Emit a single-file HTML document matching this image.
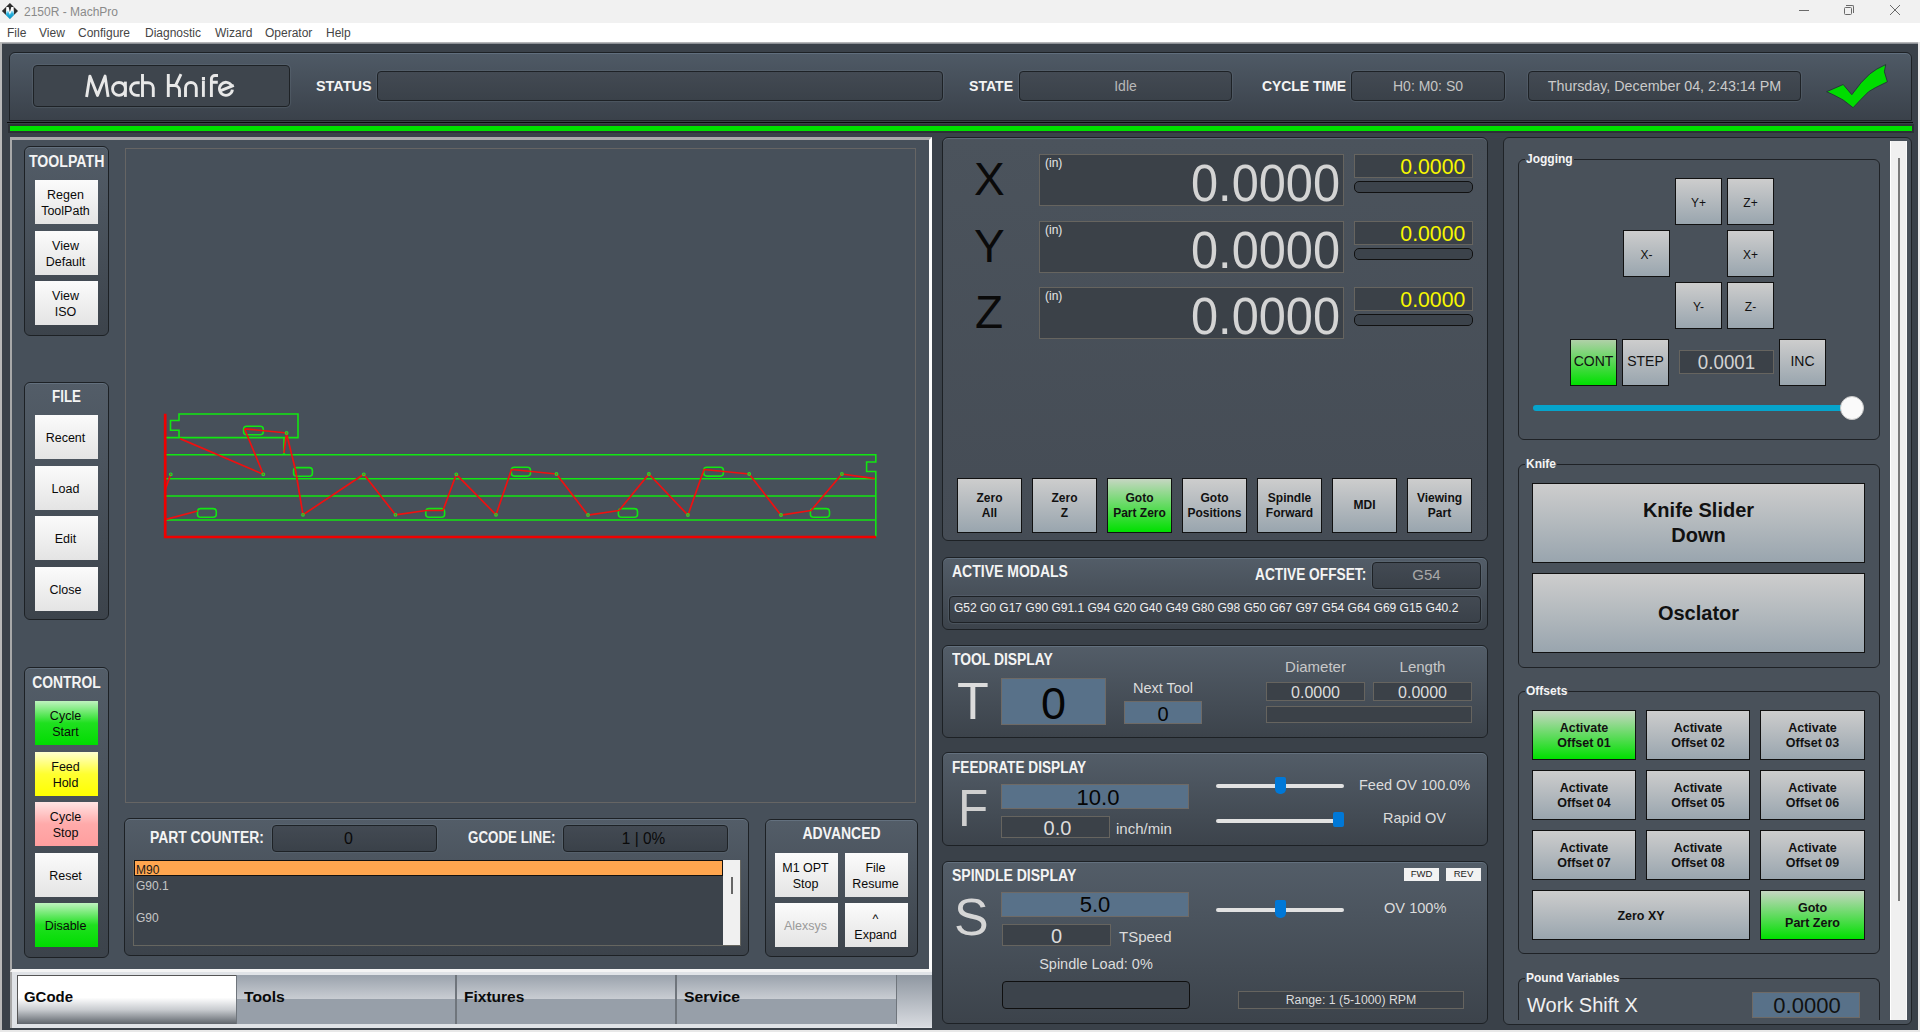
<!DOCTYPE html>
<html><head><meta charset="utf-8">
<style>
*{margin:0;padding:0;box-sizing:border-box}
html,body{width:1920px;height:1032px;overflow:hidden}
body{position:relative;background:#3a4149;font-family:"Liberation Sans",sans-serif;color:#f0f0f0}
.a{position:absolute}
.c{display:flex;align-items:center;justify-content:center;text-align:center}
.grp{position:absolute;border:1px solid #1d2125;border-radius:6px;background:linear-gradient(#535d68,#3c434b);box-shadow:inset 0 1px 0 rgba(130,150,170,.35)}
.fld{position:absolute;background:linear-gradient(#434a53,#3a4149);border:1px solid #1e2226;border-radius:4px;box-shadow:0 0 1px 1px rgba(110,122,135,.30)}
.wb{position:absolute;background:linear-gradient(#fbfbfb,#e4e4e4);color:#0a0a0a;font-size:12.5px;line-height:16px;padding-right:2px;padding-top:1px;display:flex;align-items:center;justify-content:center;text-align:center}
.gb{position:absolute;border:1px solid #111;background:linear-gradient(#cdcdcd,#99a5ae);color:#111;font-weight:bold;font-size:12px;line-height:15px;display:flex;align-items:center;justify-content:center;text-align:center}
.gr{background:linear-gradient(#c6d6c2,#00e000)}
.ttl{position:absolute;font-weight:bold;font-size:15.5px;color:#f4f4f4;white-space:nowrap}
.lbl{position:absolute;white-space:nowrap}
.dfld{position:absolute;background:#3b4148;border:1px solid #66645f}
.bfld{position:absolute;background:#587189;border:1px solid #6e6a66}
.gbox{position:absolute;border:1px solid #1f2226;border-radius:6px}
.gboxt{position:absolute;font-weight:bold;font-size:12px;color:#f4f4f4;background:#49515a;padding:0 1px;white-space:nowrap;line-height:14px}
</style></head><body>
<!-- title bar -->
<div class="a" style="left:0;top:0;width:1920px;height:23px;background:#f1f1f1"></div>
<svg class="a" style="left:0;top:0" width="22" height="22" viewBox="0 0 22 22">
<defs><linearGradient id="lg1" x1="0" y1="0" x2="0" y2="1"><stop offset="0" stop-color="#bfefff"/><stop offset="0.35" stop-color="#2ab0dc"/><stop offset="1" stop-color="#0797c8"/></linearGradient></defs>
<path d="M9.9 3 L18 11 L9.9 18.9 L1.9 11 Z" fill="#2e2e2e"/>
<path d="M6.3 7 L8.6 7 L9.9 12.3 L11.3 7 L13.6 7 L14 15 L9.9 18.9 L5.9 15 Z" fill="#fff"/>
<path d="M6.6 10.8 L8.4 10.8 L9.9 14.9 L11.4 10.8 L13.3 10.8 L14 15 L9.9 18.9 L5.9 15 Z" fill="url(#lg1)"/>
</svg>
<div class="lbl" style="left:24px;top:5px;font-size:12px;color:#8a8a8a">2150R - MachPro</div>
<div class="a" style="left:1799px;top:10px;width:10px;height:1px;background:#6a6a6a"></div>
<div class="a" style="left:1844px;top:7px;width:8px;height:8px;border:1px solid #6a6a6a;border-radius:1.5px"></div>
<div class="a" style="left:1846px;top:5px;width:8px;height:8px;border-top:1px solid #6a6a6a;border-right:1px solid #6a6a6a;border-radius:0 2px 0 0"></div>
<svg class="a" style="left:1890px;top:5px" width="10" height="10"><path d="M0 0L10 10M10 0L0 10" stroke="#6a6a6a" stroke-width="1"/></svg>
<!-- menu -->
<div class="a" style="left:0;top:23px;width:1920px;height:19px;background:#fff"></div>
<div class="lbl" style="top:26px;left:7px;font-size:12px;color:#454545">File</div>
<div class="lbl" style="top:26px;left:39px;font-size:12px;color:#454545">View</div>
<div class="lbl" style="top:26px;left:78px;font-size:12px;color:#454545">Configure</div>
<div class="lbl" style="top:26px;left:145px;font-size:12px;color:#454545">Diagnostic</div>
<div class="lbl" style="top:26px;left:215px;font-size:12px;color:#454545">Wizard</div>
<div class="lbl" style="top:26px;left:265px;font-size:12px;color:#454545">Operator</div>
<div class="lbl" style="top:26px;left:326px;font-size:12px;color:#454545">Help</div>
<div class="a" style="left:0;top:42px;width:1920px;height:2px;background:linear-gradient(#c8c8c8,#7a7f85)"></div>
<!-- window borders -->
<div class="a" style="left:0;top:42px;width:2px;height:990px;background:#b9b9b9"></div>
<div class="a" style="left:1918px;top:42px;width:2px;height:990px;background:#e8e8e8"></div>
<div class="a" style="left:0;top:1030px;width:1920px;height:2px;background:#e8e8e8"></div>

<!-- HEADER -->
<div class="grp" style="left:9px;top:52px;width:1903px;height:69px;border-radius:6px 6px 0 0;background:linear-gradient(#4f5a66,#3a414a)"></div>
<div class="fld" style="left:33px;top:65px;width:257px;height:42px;background:#3e454d"></div>
<svg class="a" style="left:0;top:0;overflow:visible" width="300" height="110" viewBox="0 0 300 110">
<g fill="none" stroke="#e8e8e8" stroke-width="2.9" stroke-linecap="butt" stroke-linejoin="round">
<path d="M86.6 96.9 L89.9 76.1 L97.5 95.4 L105.1 76.1 L108.1 96.9"/>
<circle cx="119" cy="88.9" r="6.45"/>
<path d="M125.4 81.6 V96.9"/>
<path d="M139.7 82.75 H136.8 A6.3 6.3 0 0 0 136.8 95.35 H139.7"/>
<path d="M142.5 74 V96.9 M142.5 82.75 H148 A5.3 5.3 0 0 1 153.3 88.05 V96.9"/>
<path d="M168.3 74 V96.9 M168.3 85.5 H174.5 A5 5 0 0 1 179.5 90.5 V96.9 M175.3 86 L181 74.2"/>
<path d="M185.5 96.9 V87.95 A5.4 5.4 0 0 1 196.3 87.95 V96.9"/>
<path d="M203.4 80.6 V96.9"/>
<path d="M211.4 96.9 V79 A3.55 3.55 0 0 1 214.95 75.45 H218 M211.4 82.3 H217.8"/>
<path d="M221.3 90.4 L233.8 85.3 M231.6 85.6 A6.5 6.5 0 1 0 232.4 89.6"/>
</g>
<rect x="201.9" y="77" width="3.1" height="3" fill="#e8e8e8"/>
</svg>
<div class="ttl" style="left:315.7px;top:77.0px;font-size:15px;transform:scaleX(0.961);transform-origin:left top">STATUS</div>
<div class="fld" style="left:377px;top:71px;width:566px;height:30px"></div>
<div class="ttl" style="left:969.4px;top:77.0px;font-size:15px;transform:scaleX(0.939);transform-origin:left top">STATE</div>
<div class="fld" style="left:1019px;top:71px;width:213px;height:30px"></div>
<div class="lbl" style="left:1019px;top:78px;width:213px;text-align:center;font-size:14px;color:#b8b8b8">Idle</div>
<div class="ttl" style="left:1261.5px;top:77.0px;font-size:15px;transform:scaleX(0.926);transform-origin:left top">CYCLE TIME</div>
<div class="fld" style="left:1351px;top:71px;width:154px;height:30px"></div>
<div class="lbl" style="left:1351px;top:78px;width:154px;text-align:center;font-size:14px;color:#c4c4c4">H0: M0: S0</div>
<div class="fld" style="left:1528px;top:71px;width:273px;height:30px"></div>
<div class="lbl" style="left:1528px;top:78px;width:273px;text-align:center;font-size:14.3px;color:#cacaca">Thursday, December 04, 2:43:14 PM</div>
<svg class="a" style="left:1820px;top:60px" width="72" height="52" viewBox="1820 60 72 52">
<path d="M1826.6 91.7 L1843.2 84.5 L1851.8 94.7 L1860.9 82.9 L1869.7 74 L1876.9 69 L1885.7 64.6 L1884.4 71.8 L1887.4 81.8 L1875.2 87.8 L1868.6 91.7 L1860.9 99.4 L1853.1 107.7 L1843.2 100 L1833.8 95 Z" fill="#00dc00" stroke="#26303a" stroke-width="0.9" stroke-linejoin="round"/>
</svg>
<!-- black line + green bar -->
<div class="a" style="left:7px;top:122px;width:1906px;height:1px;background:#0a0a0a"></div>
<div class="a" style="left:8px;top:124px;width:1906px;height:9px;background:#2c3136"></div>
<div class="a" style="left:10px;top:126px;width:1902px;height:5px;background:#00e000"></div>

<!-- LEFT PANEL -->
<div class="a" style="left:10px;top:137px;width:922px;height:835px;border-left:2px solid #a9a9a9;border-top:3px solid #a9a9a9;border-right:3px solid #fbfbfb;border-bottom:3px solid #f4f4f4;background:#47505a"></div>
<!-- toolpath group -->
<div class="grp" style="left:24px;top:146px;width:85px;height:190px"></div>
<div class="ttl" style="left:24px;top:152.6px;width:85px;text-align:center;font-size:16px;transform:scaleX(0.884);transform-origin:center top">TOOLPATH</div>
<div class="wb" style="left:35px;top:180px;width:63px;height:44px">Regen<br>ToolPath</div>
<div class="wb" style="left:35px;top:231px;width:63px;height:44px">View<br>Default</div>
<div class="wb" style="left:35px;top:281px;width:63px;height:44px">View<br>ISO</div>
<!-- file group -->
<div class="grp" style="left:24px;top:382px;width:85px;height:238px"></div>
<div class="ttl" style="left:24px;top:387.5px;width:85px;text-align:center;font-size:16px;transform:scaleX(0.835);transform-origin:center top">FILE</div>
<div class="wb" style="left:35px;top:415px;width:63px;height:44px">Recent</div>
<div class="wb" style="left:35px;top:466px;width:63px;height:44px">Load</div>
<div class="wb" style="left:35px;top:516px;width:63px;height:44px">Edit</div>
<div class="wb" style="left:35px;top:567px;width:63px;height:44px">Close</div>
<!-- control group -->
<div class="grp" style="left:24px;top:667px;width:85px;height:291px"></div>
<div class="ttl" style="left:24px;top:673.7px;width:85px;text-align:center;font-size:16px;transform:scaleX(0.866);transform-origin:center top">CONTROL</div>
<div class="wb" style="left:35px;top:701px;width:63px;height:44px;background:linear-gradient(#bff3bf,#1fe01f 50%,#00dc00)">Cycle<br>Start</div>
<div class="wb" style="left:35px;top:752px;width:63px;height:44px;background:linear-gradient(#ffffd0,#ffff30 50%,#ffff00)">Feed<br>Hold</div>
<div class="wb" style="left:35px;top:802px;width:63px;height:44px;background:linear-gradient(#ffe4e4,#ffaaaa 50%,#ff9e9e)">Cycle<br>Stop</div>
<div class="wb" style="left:35px;top:853px;width:63px;height:44px">Reset</div>
<div class="wb" style="left:35px;top:903px;width:63px;height:44px;background:linear-gradient(#bff3bf,#1fe01f 50%,#00dc00)">Disable</div>
<!-- viewport -->
<div class="a" style="left:125px;top:148px;width:791px;height:655px;border:1px solid #666564"></div>
<svg class="a" style="left:0;top:0" width="932" height="802" viewBox="0 0 932 802">
<g fill="none" stroke="#12e612" stroke-width="1.6">
<path d="M165 437.6 H298 V414 H179 V420.5 H170.5 V430.3 H179 V437.6"/>
<path d="M165 454.8 H875.8 V462 H866.6 V471.5 H875.8 V536.5"/>
<path d="M165 478.7 H875.8"/>
<path d="M165 496 H875.8"/>
<path d="M165 520 H875.8"/>
<path d="M284 438 V454.8"/>
<rect x="243.6" y="426.3" width="19.7" height="8.4" rx="3"/>
<rect x="197.5" y="508.6" width="18.8" height="8.6" rx="3"/>
<rect x="293.6" y="467.6" width="18.8" height="8.6" rx="3"/>
<rect x="425.8" y="508.6" width="18.8" height="8.6" rx="3"/>
<rect x="511.3" y="467.3" width="19.2" height="8.8" rx="3"/>
<rect x="618.4" y="508.6" width="19.1" height="8.6" rx="3"/>
<rect x="703.7" y="467.3" width="19.7" height="8.8" rx="3"/>
<rect x="810.4" y="508.6" width="19.1" height="8.6" rx="3"/>
</g>
<g fill="none" stroke="#f01010" stroke-width="1.7" stroke-linejoin="round">
<path d="M165 519.6 L197.5 511"/>
<path d="M244.5 428.8 L263.3 474.3"/>
<path d="M180 438.6 L263.3 474.3"/>
<path d="M244.5 428.8 L287 433"/>
<path d="M286.6 433 L284 453 M286.6 434 L295.5 470 L303 514.8 L363.8 474.3 L395.5 514.8 L426 510.5 L443 510.5 L456.3 474.3 L496 514.8 L511.5 469.5 L556.5 474 L588 515.2 L619 510.5 L648.9 474 L687.9 515.2 L704 469.5 L749.2 474 L781 515.2 L811 510.5 L841.9 474 L874.8 478.6"/>
<path d="M165 490 L170.8 474.3"/>
</g>
<g fill="none" stroke="#22e022" stroke-width="1.2">
<circle cx="170.8" cy="474.3" r="1.3"/><circle cx="263.3" cy="474.3" r="1.3"/><circle cx="286.6" cy="433" r="1.3"/>
<circle cx="303" cy="514.8" r="1.3"/><circle cx="363.8" cy="474.3" r="1.3"/><circle cx="395.5" cy="514.8" r="1.3"/>
<circle cx="456.3" cy="474.3" r="1.3"/><circle cx="496" cy="514.8" r="1.3"/><circle cx="556.5" cy="474" r="1.3"/>
<circle cx="588" cy="515" r="1.3"/><circle cx="648.9" cy="474" r="1.3"/><circle cx="687.9" cy="515" r="1.3"/>
<circle cx="749.2" cy="474" r="1.3"/><circle cx="781" cy="515" r="1.3"/><circle cx="841.9" cy="474" r="1.3"/>
</g>
<path d="M165.2 413.8 V537 H876" fill="none" stroke="#f00000" stroke-width="2.7"/>
</svg>
<!-- part counter panel -->
<div class="grp" style="left:124px;top:818px;width:625px;height:138px"></div>
<div class="ttl" style="left:150.2px;top:828.8px;font-size:16px;transform:scaleX(0.867);transform-origin:left top">PART COUNTER:</div>
<div class="fld" style="left:272px;top:825px;width:165px;height:27px"></div>
<div class="lbl" style="left:266px;top:830px;width:165px;text-align:center;font-size:16px;color:#0a0a0a">0</div>
<div class="ttl" style="left:468.2px;top:828.8px;font-size:16px;transform:scaleX(0.834);transform-origin:left top">GCODE LINE:</div>
<div class="fld" style="left:563px;top:825px;width:165px;height:27px"></div>
<div class="lbl" style="left:561px;top:830px;width:165px;text-align:center;font-size:16px;color:#0a0a0a;transform:scaleX(.96)">1 | 0%</div>
<div class="a" style="left:133px;top:860px;width:608px;height:86px;background:#3c434b;border:1px solid #666660"></div>
<div class="a" style="left:134px;top:860px;width:589px;height:16px;background:#ffa64f;border:1px solid #111"></div>
<div class="lbl" style="left:136px;top:863px;font-size:12px;color:#1a1a1a">M90</div>
<div class="lbl" style="left:136px;top:879px;font-size:12px;color:#c6c6c6">G90.1</div>
<div class="lbl" style="left:136px;top:911px;font-size:12px;color:#c6c6c6">G90</div>
<div class="a" style="left:723px;top:860px;width:17px;height:85px;background:#f0f0f0"></div>
<div class="a" style="left:731px;top:877px;width:2px;height:17px;background:#666"></div>
<!-- advanced -->
<div class="grp" style="left:765px;top:819px;width:153px;height:138px"></div>
<div class="ttl" style="left:765px;top:825.1px;width:153px;text-align:center;font-size:16px;transform:scaleX(0.873);transform-origin:center top">ADVANCED</div>
<div class="wb" style="left:775px;top:853px;width:63px;height:44px">M1 OPT<br>Stop</div>
<div class="wb" style="left:845px;top:853px;width:63px;height:44px">File<br>Resume</div>
<div class="wb" style="left:775px;top:903px;width:63px;height:44px;color:#9a9a9a">Alexsys</div>
<div class="wb" style="left:845px;top:903px;width:63px;height:44px;line-height:16px;padding-top:3px">^<br>Expand</div>
<!-- tabs -->
<div class="a" style="left:10px;top:972px;width:922px;height:56px;background:#e0e3e7;border-left:2px solid #a9a9a9"></div>
<div class="a" style="left:17px;top:975px;width:219px;height:49px;background:linear-gradient(#fff 0%,#fff 45%,#c9ccd0 70%,#5f656c 100%);border-left:1px solid #555;border-top:1px solid #555"></div>
<div class="a" style="left:236px;top:975px;width:220px;height:49px;background:linear-gradient(#9aa2ac 0%,#c8ccd2 48%,#979fa9 50%,#979fa9 100%);border-left:1px solid #6f757c;border-right:1px solid #6f757c"></div>
<div class="a" style="left:456px;top:975px;width:220px;height:49px;background:linear-gradient(#9aa2ac 0%,#c8ccd2 48%,#979fa9 50%,#979fa9 100%);border-left:1px solid #6f757c;border-right:1px solid #6f757c"></div>
<div class="a" style="left:676px;top:975px;width:221px;height:49px;background:linear-gradient(#9aa2ac 0%,#c8ccd2 48%,#979fa9 50%,#979fa9 100%);border-left:1px solid #6f757c;border-right:1px solid #6f757c"></div>
<div class="a" style="left:897px;top:975px;width:35px;height:52px;background:linear-gradient(#8f97a1,#d8dbe0)"></div>
<div class="lbl" style="left:24px;top:988px;font-size:15.5px;font-weight:bold;color:#0a0a0a;transform:scaleX(.963);transform-origin:left top">GCode</div>
<div class="lbl" style="left:244px;top:988px;font-size:15.5px;font-weight:bold;color:#0a0a0a;transform:scaleX(1.015);transform-origin:left top">Tools</div>
<div class="lbl" style="left:464px;top:988px;font-size:15.5px;font-weight:bold;color:#0a0a0a;transform:scaleX(1.0);transform-origin:left top">Fixtures</div>
<div class="lbl" style="left:684px;top:988px;font-size:15.5px;font-weight:bold;color:#0a0a0a;transform:scaleX(1.015);transform-origin:left top">Service</div>

<!-- DRO PANEL -->
<div class="grp" style="left:942px;top:137px;width:546px;height:404px;background:linear-gradient(#4b535c,#454c55)"></div>
<div class="lbl" style="left:974px;top:152px;font-size:46px;color:#0a0a0a">X</div>
<div class="lbl" style="left:974px;top:219px;font-size:46px;color:#0a0a0a">Y</div>
<div class="lbl" style="left:975px;top:285px;font-size:46px;color:#0a0a0a">Z</div>
<div class="dfld" style="left:1039px;top:154px;width:305px;height:52px"></div>
<div class="dfld" style="left:1039px;top:221px;width:305px;height:52px"></div>
<div class="dfld" style="left:1039px;top:287px;width:305px;height:52px"></div>
<div class="lbl" style="left:1045px;top:156px;font-size:12px;color:#e6e6e6">(in)</div>
<div class="lbl" style="left:1045px;top:223px;font-size:12px;color:#e6e6e6">(in)</div>
<div class="lbl" style="left:1045px;top:289px;font-size:12px;color:#e6e6e6">(in)</div>
<div class="lbl" style="right:580px;top:154px;font-size:51px;color:#d4d4d4;transform:scaleX(.955);transform-origin:right top">0.0000</div>
<div class="lbl" style="right:580px;top:221px;font-size:51px;color:#d4d4d4;transform:scaleX(.955);transform-origin:right top">0.0000</div>
<div class="lbl" style="right:580px;top:287px;font-size:51px;color:#d4d4d4;transform:scaleX(.955);transform-origin:right top">0.0000</div>
<div class="dfld" style="left:1354px;top:154px;width:119px;height:24px"></div>
<div class="dfld" style="left:1354px;top:221px;width:119px;height:24px"></div>
<div class="dfld" style="left:1354px;top:287px;width:119px;height:24px"></div>
<div class="lbl" style="right:455px;top:154px;font-size:22px;color:#f8f800;transform:scaleX(.965);transform-origin:right top">0.0000</div>
<div class="lbl" style="right:455px;top:221px;font-size:22px;color:#f8f800;transform:scaleX(.965);transform-origin:right top">0.0000</div>
<div class="lbl" style="right:455px;top:287px;font-size:22px;color:#f8f800;transform:scaleX(.965);transform-origin:right top">0.0000</div>
<div class="a" style="left:1354px;top:181px;width:119px;height:12px;border:1px solid #111;border-radius:5px;background:#3c434b"></div>
<div class="a" style="left:1354px;top:248px;width:119px;height:12px;border:1px solid #111;border-radius:5px;background:#3c434b"></div>
<div class="a" style="left:1354px;top:314px;width:119px;height:12px;border:1px solid #111;border-radius:5px;background:#3c434b"></div>
<div class="gb" style="left:957px;top:478px;width:65px;height:55px">Zero<br>All</div>
<div class="gb" style="left:1032px;top:478px;width:65px;height:55px">Zero<br>Z</div>
<div class="gb gr" style="left:1107px;top:478px;width:65px;height:55px">Goto<br>Part Zero</div>
<div class="gb" style="left:1182px;top:478px;width:65px;height:55px">Goto<br>Positions</div>
<div class="gb" style="left:1257px;top:478px;width:65px;height:55px">Spindle<br>Forward</div>
<div class="gb" style="left:1332px;top:478px;width:65px;height:55px">MDI</div>
<div class="gb" style="left:1407px;top:478px;width:65px;height:55px">Viewing<br>Part</div>

<!-- ACTIVE MODALS -->
<div class="grp" style="left:942px;top:557px;width:546px;height:73px"></div>
<div class="ttl" style="left:952.2px;top:562.7px;font-size:16px;transform:scaleX(0.875);transform-origin:left top">ACTIVE MODALS</div>
<div class="ttl" style="left:1255.4px;top:565.7px;font-size:16px;transform:scaleX(0.857);transform-origin:left top">ACTIVE OFFSET:</div>
<div class="fld" style="left:1372px;top:562px;width:109px;height:27px"></div>
<div class="lbl" style="left:1372px;top:566px;width:109px;text-align:center;font-size:15px;color:#a8a8a8">G54</div>
<div class="fld" style="left:949px;top:596px;width:532px;height:27px"></div>
<div class="lbl" style="left:954px;top:601px;font-size:12px;color:#f0f0f0">G52 G0 G17 G90 G91.1 G94 G20 G40 G49 G80 G98 G50 G67 G97 G54 G64 G69 G15 G40.2</div>

<!-- TOOL DISPLAY -->
<div class="grp" style="left:942px;top:645px;width:546px;height:93px"></div>
<div class="ttl" style="left:952.2px;top:650.5px;font-size:16px;transform:scaleX(0.868);transform-origin:left top">TOOL DISPLAY</div>
<div class="lbl" style="left:957px;top:671px;font-size:52px;color:#dcdcdc">T</div>
<div class="bfld" style="left:1001px;top:678px;width:105px;height:47px"></div>
<div class="lbl" style="left:1001px;top:678px;width:105px;text-align:center;font-size:45px;color:#050505">0</div>
<div class="lbl" style="left:1124px;top:680px;width:78px;text-align:center;font-size:14.5px;color:#dcdcdc">Next Tool</div>
<div class="bfld" style="left:1124px;top:701px;width:78px;height:23px"></div>
<div class="lbl" style="left:1124px;top:703px;width:78px;text-align:center;font-size:20px;color:#050505">0</div>
<div class="lbl" style="left:1266px;top:658px;width:99px;text-align:center;font-size:15px;color:#c8c8c8">Diameter</div>
<div class="lbl" style="left:1373px;top:658px;width:99px;text-align:center;font-size:15px;color:#c8c8c8">Length</div>
<div class="dfld" style="left:1266px;top:682px;width:99px;height:19px"></div>
<div class="dfld" style="left:1373px;top:682px;width:99px;height:19px"></div>
<div class="lbl" style="left:1266px;top:684px;width:99px;text-align:center;font-size:16px;color:#dcdcdc">0.0000</div>
<div class="lbl" style="left:1373px;top:684px;width:99px;text-align:center;font-size:16px;color:#dcdcdc">0.0000</div>
<div class="dfld" style="left:1266px;top:706px;width:206px;height:17px"></div>

<!-- FEEDRATE -->
<div class="grp" style="left:942px;top:752px;width:546px;height:94px"></div>
<div class="ttl" style="left:952.0px;top:758.5px;font-size:16px;transform:scaleX(0.853);transform-origin:left top">FEEDRATE DISPLAY</div>
<div class="lbl" style="left:958px;top:778px;font-size:52px;transform:scaleX(.95);transform-origin:left top;color:#cfcfcf">F</div>
<div class="bfld" style="left:1001px;top:784px;width:188px;height:25px"></div>
<div class="lbl" style="left:1004px;top:785px;width:188px;text-align:center;font-size:22px;color:#050505">10.0</div>
<div class="dfld" style="left:1001px;top:816px;width:109px;height:22px"></div>
<div class="lbl" style="left:1003px;top:817px;width:109px;text-align:center;font-size:20px;color:#dcdcdc">0.0</div>
<div class="lbl" style="left:1116px;top:820px;font-size:15px;color:#dcdcdc">inch/min</div>
<div class="a" style="left:1216px;top:784px;width:128px;height:4px;background:#e2e2e2;border-radius:2px"></div>
<div class="a" style="left:1275px;top:777px;width:11px;height:17px;background:#0078d7;border-radius:2px 2px 5px 5px"></div>
<div class="lbl" style="left:1359px;top:777px;font-size:14.5px;color:#dcdcdc">Feed OV 100.0%</div>
<div class="a" style="left:1216px;top:819px;width:128px;height:4px;background:#e2e2e2;border-radius:2px"></div>
<div class="a" style="left:1333px;top:812px;width:11px;height:15px;background:#0078d7;border-radius:2px"></div>
<div class="lbl" style="left:1359px;top:810px;width:111px;text-align:center;font-size:14.5px;color:#dcdcdc">Rapid OV</div>

<!-- SPINDLE -->
<div class="grp" style="left:942px;top:861px;width:546px;height:163px"></div>
<div class="ttl" style="left:952.0px;top:866.7px;font-size:16px;transform:scaleX(0.877);transform-origin:left top">SPINDLE DISPLAY</div>
<div class="a c" style="left:1404px;top:868px;width:35px;height:13px;background:#f2f2f2;font-size:9.5px;color:#222;padding-bottom:2px">FWD</div>
<div class="a c" style="left:1446px;top:868px;width:35px;height:13px;background:#f2f2f2;font-size:9.5px;color:#222;padding-bottom:2px">REV</div>
<div class="lbl" style="left:954px;top:887px;font-size:52px;color:#d6d6d6">S</div>
<div class="bfld" style="left:1001px;top:892px;width:188px;height:25px"></div>
<div class="lbl" style="left:1001px;top:892px;width:188px;text-align:center;font-size:22px;color:#050505">5.0</div>
<div class="dfld" style="left:1002px;top:924px;width:109px;height:22px"></div>
<div class="lbl" style="left:1002px;top:925px;width:109px;text-align:center;font-size:20px;color:#dcdcdc">0</div>
<div class="lbl" style="left:1119px;top:928px;font-size:15px;color:#dcdcdc">TSpeed</div>
<div class="lbl" style="left:1002px;top:956px;width:188px;text-align:center;font-size:14.5px;color:#dcdcdc">Spindle Load: 0%</div>
<div class="a" style="left:1002px;top:981px;width:188px;height:28px;border:1px solid #0f0f0f;border-radius:4px;background:#3c434b"></div>
<div class="a" style="left:1216px;top:908px;width:128px;height:4px;background:#e2e2e2;border-radius:2px"></div>
<div class="a" style="left:1275px;top:900px;width:11px;height:18px;background:#0078d7;border-radius:2px 2px 5px 5px"></div>
<div class="lbl" style="left:1384px;top:900px;font-size:14.6px;color:#dcdcdc">OV 100%</div>
<div class="dfld" style="left:1238px;top:991px;width:226px;height:18px"></div>
<div class="lbl" style="left:1238px;top:993px;width:226px;text-align:center;font-size:12.3px;color:#dcdcdc">Range: 1 (5-1000) RPM</div>

<!-- RIGHT PANEL -->
<div class="a" style="left:1503px;top:137px;width:409px;height:888px;border:1px solid #1f2327;border-radius:6px;background:#49515a"></div>
<div class="a" style="left:1890px;top:141px;width:17px;height:879px;background:#f0f0f0;border-left:1px solid #fff;border-right:1px solid #fafafa"></div>
<div class="a" style="left:1898px;top:158px;width:2px;height:743px;background:#7b7b7b"></div>
<!-- jogging -->
<div class="gbox" style="left:1518px;top:159px;width:362px;height:281px"></div>
<div class="gboxt" style="left:1525px;top:152px">Jogging</div>
<div class="gb" style="left:1675px;top:178px;width:47px;height:47px;font-weight:normal;font-size:12px;padding-top:3px">Y+</div>
<div class="gb" style="left:1727px;top:178px;width:47px;height:47px;font-weight:normal;font-size:12px;padding-top:3px">Z+</div>
<div class="gb" style="left:1623px;top:230px;width:47px;height:47px;font-weight:normal;font-size:12px;padding-top:3px">X-</div>
<div class="gb" style="left:1727px;top:230px;width:47px;height:47px;font-weight:normal;font-size:12px;padding-top:3px">X+</div>
<div class="gb" style="left:1675px;top:282px;width:47px;height:47px;font-weight:normal;font-size:12px;padding-top:3px">Y-</div>
<div class="gb" style="left:1727px;top:282px;width:47px;height:47px;font-weight:normal;font-size:12px;padding-top:3px">Z-</div>
<div class="gb gr" style="left:1570px;top:339px;width:47px;height:47px;font-weight:normal;font-size:14px;padding-bottom:2px;background:linear-gradient(#b0d0a8,#00e000)">CONT</div>
<div class="gb" style="left:1622px;top:339px;width:47px;height:47px;font-weight:normal;font-size:14px;padding-bottom:2px">STEP</div>
<div class="dfld" style="left:1679px;top:350px;width:95px;height:24px"></div>
<div class="lbl" style="left:1679px;top:351px;width:95px;text-align:center;font-size:19.5px;color:#d2d2d2;transform:scaleX(.96)">0.0001</div>
<div class="gb" style="left:1779px;top:339px;width:47px;height:47px;font-weight:normal;font-size:14px;padding-bottom:2px">INC</div>
<div class="a" style="left:1533px;top:405px;width:320px;height:6px;background:#06a4cc;border-radius:3px"></div>
<div class="a" style="left:1840px;top:396px;width:24px;height:24px;background:#fafafa;border-radius:50%;border:1px solid #c8c8c8"></div>
<!-- knife -->
<div class="gbox" style="left:1518px;top:464px;width:362px;height:204px"></div>
<div class="gboxt" style="left:1525px;top:457px">Knife</div>
<div class="gb" style="left:1532px;top:483px;width:333px;height:80px;font-size:20px;line-height:25px">Knife Slider<br>Down</div>
<div class="gb" style="left:1532px;top:573px;width:333px;height:80px;font-size:20px;line-height:25px">Osclator</div>
<!-- offsets -->
<div class="gbox" style="left:1518px;top:691px;width:362px;height:263px"></div>
<div class="gboxt" style="left:1525px;top:684px">Offsets</div>
<div class="gb gr" style="left:1532px;top:710px;width:104px;height:50px;font-size:12.5px;padding-top:2px">Activate<br>Offset 01</div>
<div class="gb" style="left:1646px;top:710px;width:104px;height:50px;font-size:12.5px;padding-top:2px">Activate<br>Offset 02</div>
<div class="gb" style="left:1760px;top:710px;width:105px;height:50px;font-size:12.5px;padding-top:2px">Activate<br>Offset 03</div>
<div class="gb" style="left:1532px;top:770px;width:104px;height:50px;font-size:12.5px;padding-top:2px">Activate<br>Offset 04</div>
<div class="gb" style="left:1646px;top:770px;width:104px;height:50px;font-size:12.5px;padding-top:2px">Activate<br>Offset 05</div>
<div class="gb" style="left:1760px;top:770px;width:105px;height:50px;font-size:12.5px;padding-top:2px">Activate<br>Offset 06</div>
<div class="gb" style="left:1532px;top:830px;width:104px;height:50px;font-size:12.5px;padding-top:2px">Activate<br>Offset 07</div>
<div class="gb" style="left:1646px;top:830px;width:104px;height:50px;font-size:12.5px;padding-top:2px">Activate<br>Offset 08</div>
<div class="gb" style="left:1760px;top:830px;width:105px;height:50px;font-size:12.5px;padding-top:2px">Activate<br>Offset 09</div>
<div class="gb" style="left:1532px;top:890px;width:218px;height:50px;font-size:12.5px;padding-top:2px">Zero XY</div>
<div class="gb gr" style="left:1760px;top:890px;width:105px;height:50px;font-size:12.5px;padding-top:2px">Goto<br>Part Zero</div>
<!-- pound vars -->
<div class="a" style="left:1518px;top:978px;width:362px;height:42px;border:1px solid #1f2226;border-bottom:none;border-radius:6px 6px 0 0"></div>
<div class="gboxt" style="left:1525px;top:971px">Pound Variables</div>
<div class="lbl" style="left:1527px;top:994px;font-size:20px;color:#f0f0f0">Work Shift X</div>
<div class="bfld" style="left:1752px;top:992px;width:108px;height:26px"></div>
<div class="lbl" style="left:1753px;top:993px;width:108px;text-align:center;font-size:22px;color:#111">0.0000</div>

</body></html>
